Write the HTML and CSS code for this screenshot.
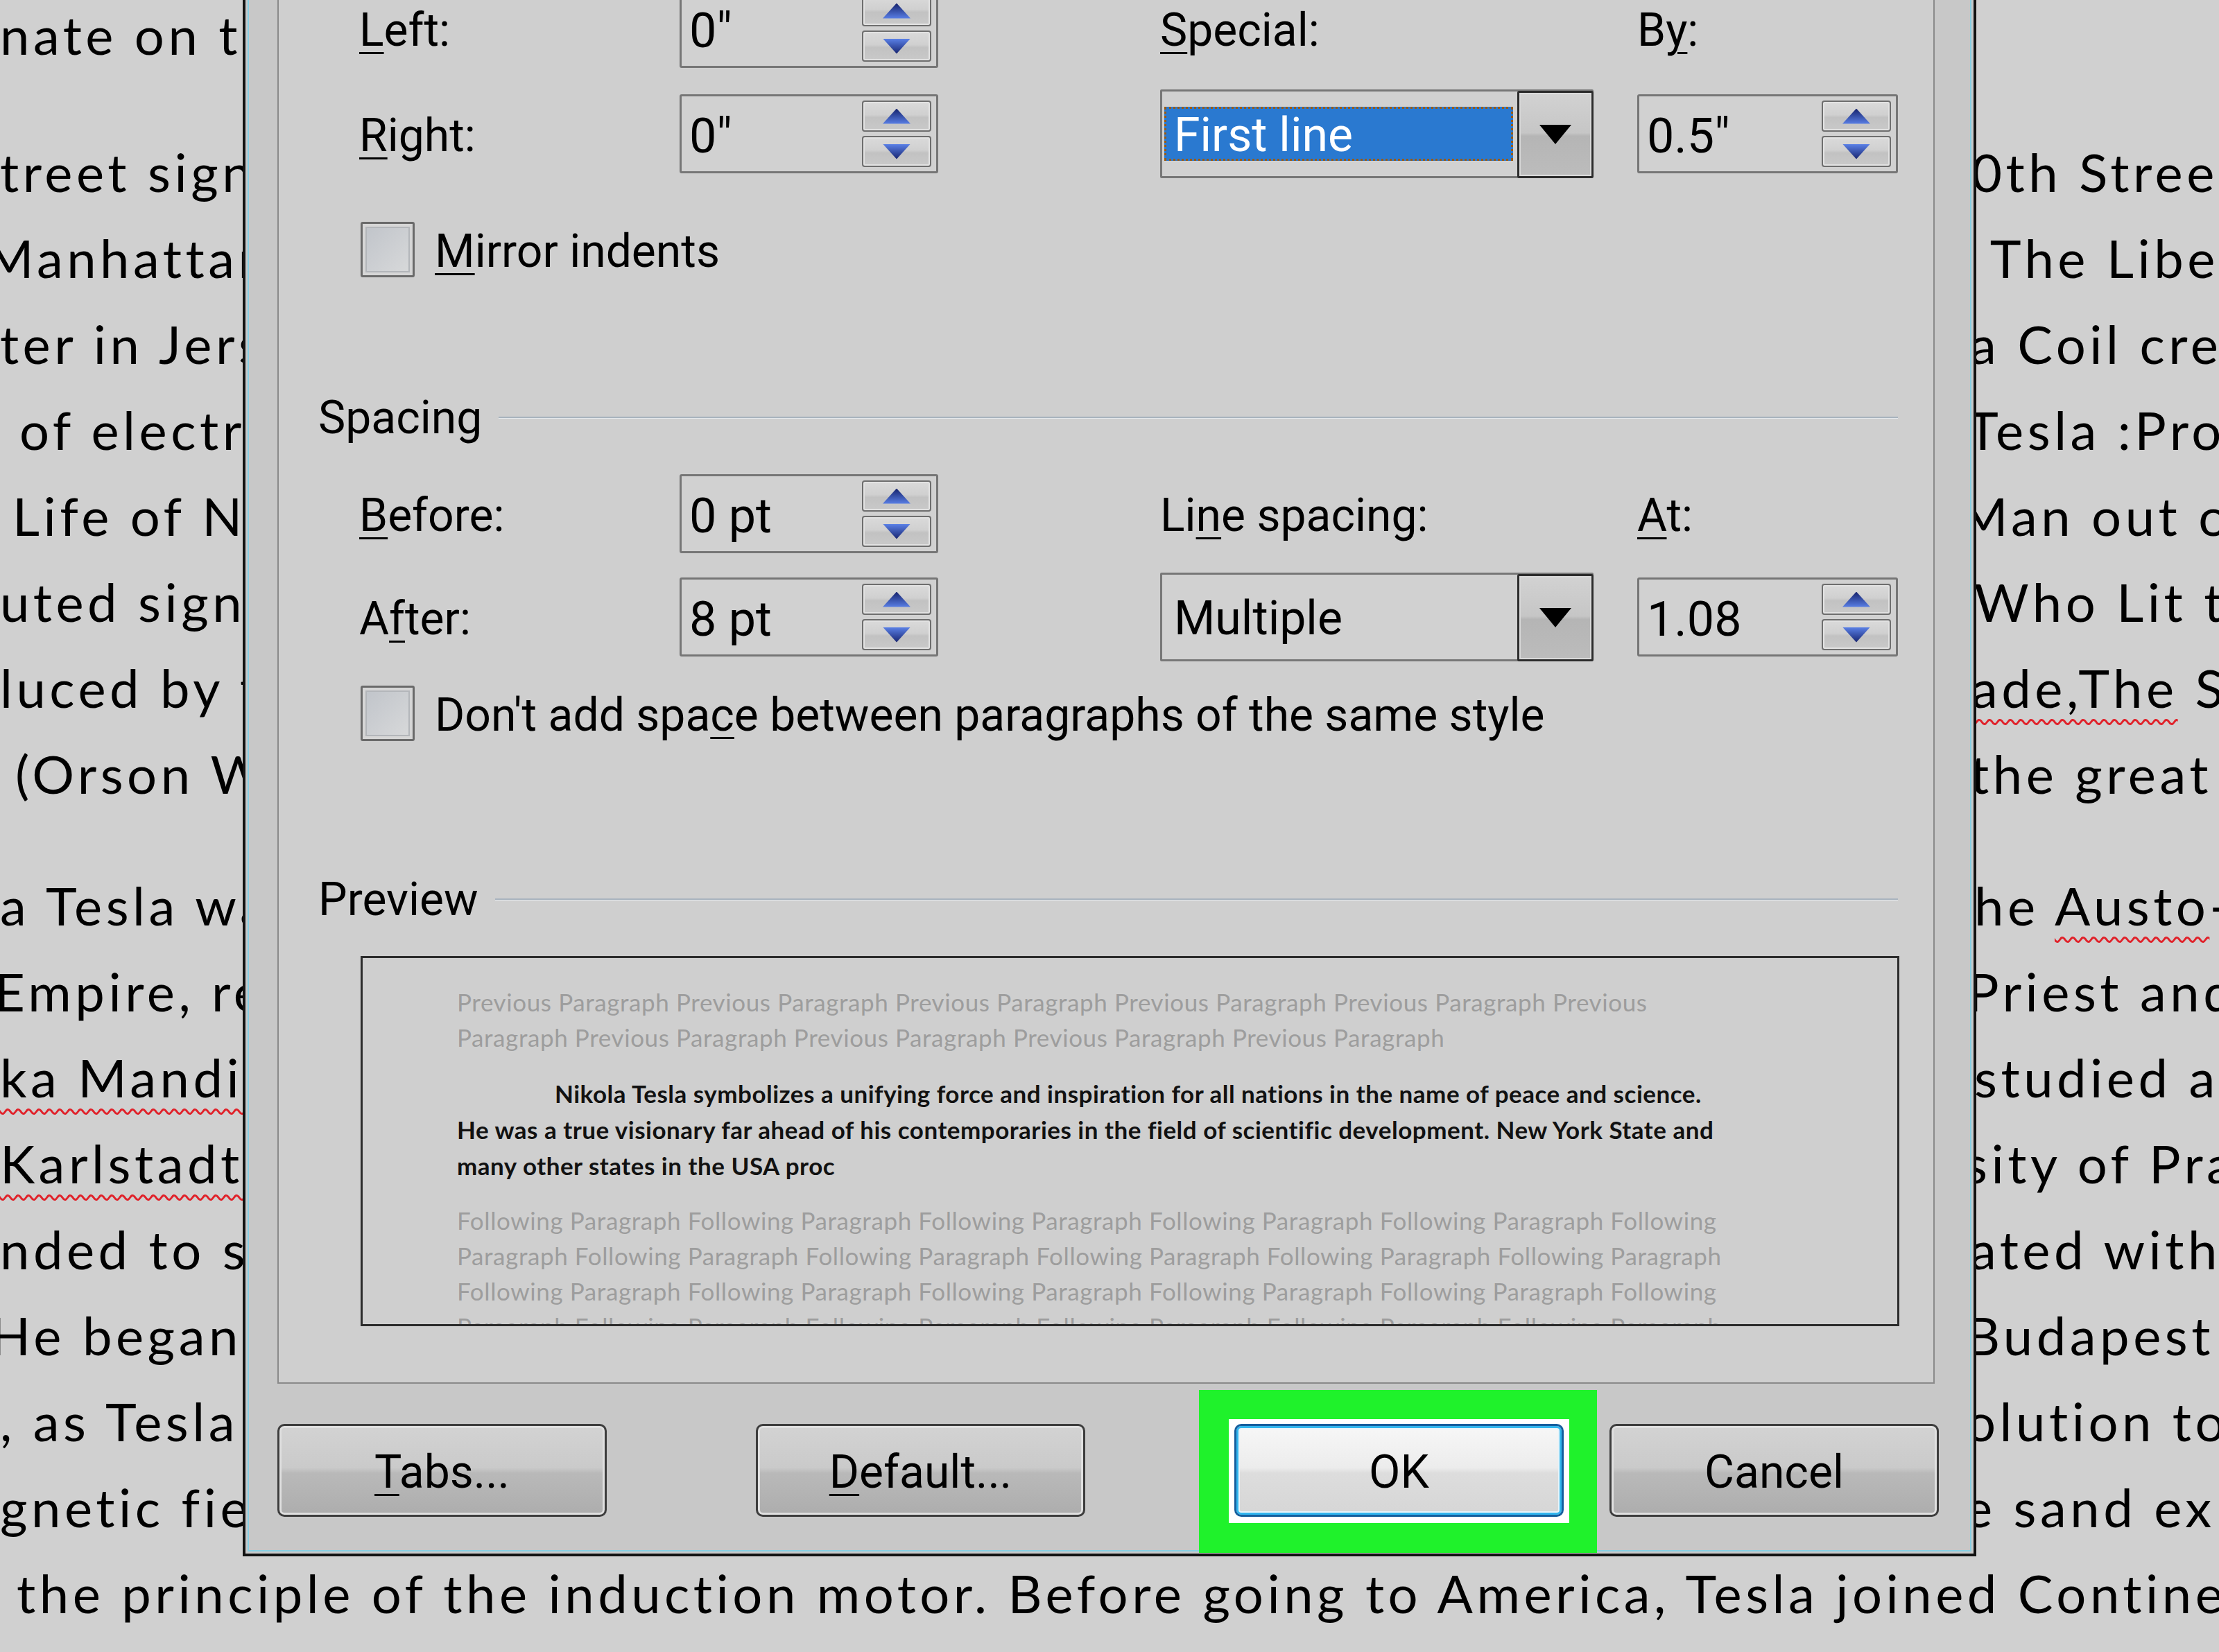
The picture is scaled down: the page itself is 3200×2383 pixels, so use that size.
FILE: index.html
```html
<!DOCTYPE html>
<html>
<head>
<meta charset="utf-8">
<link rel="stylesheet" href="styles.css">
</head>
<body>
<div class="doc">
  <div class="para p1">
    <div class="ln"><span class="l"><span>nate on the</span></span><span class="r"></span></div>
  </div>
  <div class="para p2">
    <div class="ln"><span class="l"><span>treet signs</span></span><span class="r"><span class="n4">0th Street</span></span></div>
    <div class="ln"><span class="l"><span class="n22">Manhattan</span></span><span class="r"><span>&nbsp;The Liberty</span></span></div>
    <div class="ln"><span class="l"><span>ter in Jersey</span></span><span class="r"><span class="n6">a Coil create</span></span></div>
    <div class="ln"><span class="l"><span class="p28">of electricity</span></span><span class="r"><span class="n10">Tesla :Pro</span></span></div>
    <div class="ln"><span class="l"><span class="p18">Life of Nikola</span></span><span class="r"><span class="n22">Man out of</span></span></div>
    <div class="ln"><span class="l"><span>uted significantly</span></span><span class="r"><span>Who Lit the</span></span></div>
    <div class="ln"><span class="l"><span>luced by the</span></span><span class="r"><span class="n4"><span class="sq">ade,The</span> Sky</span></span></div>
    <div class="ln"><span class="l"><span class="p22">(Orson Welles</span></span><span class="r"><span class="n6">the great</span></span></div>
  </div>
  <div class="para p3">
    <div class="ln"><span class="l"><span>a Tesla was</span></span><span class="r"><span>he <span class="sq">Austo</span>-Hungarian</span></span></div>
    <div class="ln"><span class="l"><span class="n8">Empire, re</span></span><span class="r"><span class="n10">Priest and</span></span></div>
    <div class="ln"><span class="l"><span><span class="sq">ka Mandi</span>c</span></span><span class="r"><span>studied at</span></span></div>
    <div class="ln"><span class="l"><span class="sq">Karlstadt</span></span><span class="r"><span class="n14">sity of Prague</span></span></div>
    <div class="ln"><span class="l"><span>nded to s</span></span><span class="r"><span class="n6">ated with</span></span></div>
    <div class="ln"><span class="l"><span class="n14">He began</span></span><span class="r"><span class="n12">Budapest</span></span></div>
    <div class="ln"><span class="l"><span>, as Tesla</span></span><span class="r"><span class="n12">olution to</span></span></div>
    <div class="ln"><span class="l"><span>gnetic field</span></span><span class="r"><span class="n14">e sand ex</span></span></div>
    <div class="ln full">the principle of the induction motor. Before going to America, Tesla joined Continental</div>
  </div>
</div>

<div class="dialog">
  <div class="panel">
    <div class="grid">
      <div class="c1 lbl"><u>L</u>eft:</div>
      <div class="c2 spin"><span class="sv">0"</span><span class="sb"><span class="sbt"><i class="up"></i></span><span class="sbt"><i class="dn"></i></span></span></div>
      <div class="c4 lbl"><u>S</u>pecial:</div>
      <div class="c6 lbl">B<u>y</u>:</div>

      <div class="c1 lbl"><u>R</u>ight:</div>
      <div class="c2 spin"><span class="sv">0"</span><span class="sb"><span class="sbt"><i class="up"></i></span><span class="sbt"><i class="dn"></i></span></span></div>
      <div class="c4 dd"><span class="dv sel">First line</span><span class="db"><i class="tri"></i></span></div>
      <div class="c6 spin"><span class="sv">0.5"</span><span class="sb"><span class="sbt"><i class="up"></i></span><span class="sbt"><i class="dn"></i></span></span></div>
    </div>

    <div class="check mirror"><span class="box"></span><span class="ct"><u>M</u>irror indents</span></div>

    <div class="ghead g-spacing">Spacing</div>

    <div class="grid grid2">
      <div class="c1 lbl"><u>B</u>efore:</div>
      <div class="c2 spin"><span class="sv">0 pt</span><span class="sb"><span class="sbt"><i class="up"></i></span><span class="sbt"><i class="dn"></i></span></span></div>
      <div class="c4 lbl">Li<u>n</u>e spacing:</div>
      <div class="c6 lbl"><u>A</u>t:</div>

      <div class="c1 lbl">A<u>f</u>ter:</div>
      <div class="c2 spin"><span class="sv">8 pt</span><span class="sb"><span class="sbt"><i class="up"></i></span><span class="sbt"><i class="dn"></i></span></span></div>
      <div class="c4 dd"><span class="dv">Multiple</span><span class="db"><i class="tri"></i></span></div>
      <div class="c6 spin"><span class="sv">1.08</span><span class="sb"><span class="sbt"><i class="up"></i></span><span class="sbt"><i class="dn"></i></span></span></div>
    </div>

    <div class="check dontadd"><span class="box"></span><span class="ct">Don't add spa<u>c</u>e between paragraphs of the same style</span></div>

    <div class="ghead g-preview">Preview</div>

    <div class="preview">
      <div class="pv-prev">
        <div>Previous Paragraph Previous Paragraph Previous Paragraph Previous Paragraph Previous Paragraph Previous</div>
        <div>Paragraph Previous Paragraph Previous Paragraph Previous Paragraph Previous Paragraph</div>
      </div>
      <div class="pv-main">
        <div class="first">Nikola Tesla symbolizes a unifying force and inspiration for all nations in the name of peace and science.</div>
        <div>He was a true visionary far ahead of his contemporaries in the field of scientific development. New York State and</div>
        <div>many other states in the USA proc</div>
      </div>
      <div class="pv-prev">
        <div>Following Paragraph Following Paragraph Following Paragraph Following Paragraph Following Paragraph Following</div>
        <div>Paragraph Following Paragraph Following Paragraph Following Paragraph Following Paragraph Following Paragraph</div>
        <div>Following Paragraph Following Paragraph Following Paragraph Following Paragraph Following Paragraph Following</div>
        <div>Paragraph Following Paragraph Following Paragraph Following Paragraph Following Paragraph Following Paragraph</div>
      </div>
    </div>
  </div>

  <div class="btns">
    <div class="btn"><span><u>T</u>abs...</span></div>
    <div class="btn"><span><u>D</u>efault...</span></div>
    <div class="hl"><div class="hl-in"><div class="btn ok"><span>OK</span></div></div></div>
    <div class="btn cancel"><span>Cancel</span></div>
  </div>
</div>
</body>
</html>
```

FILE: styles.css
```css
html, body {
  margin: 0;
  padding: 0;
}
body {
  width: 3200px;
  height: 2383px;
  overflow: hidden;
  position: relative;
  background: #d0d0d0;
  color: #000;
}

/* ---------- document behind ---------- */
.doc {
  margin-top: -12px;
  font-family: Lato, "Open Sans", sans-serif;
  font-size: 76px;
  letter-spacing: 5.5px;
  line-height: 124px;
}
.para.p1 { margin-bottom: 74px; }
.para.p2 { margin-bottom: 66px; }
.ln {
  display: flex;
  justify-content: space-between;
  height: 124px;
  white-space: nowrap;
}
.ln .l {
  width: 400px;
  overflow: hidden;
}
.ln .r {
  width: 353px;
}
.ln .l > span,
.ln .r > span {
  display: inline-block;
}
.ln.full {
  display: block;
  padding-left: 24px;
}
.n4 { margin-left: -4px; }
.n6 { margin-left: -6px; }
.n8 { margin-left: -8px; }
.n10 { margin-left: -10px; }
.n12 { margin-left: -12px; }
.n14 { margin-left: -14px; }
.n22 { margin-left: -22px; }
.p18 { margin-left: 18px; }
.p22 { margin-left: 22px; }
.p28 { margin-left: 28px; }
.sq {
  text-decoration: underline wavy #e0222a;
  text-decoration-thickness: 3px;
  text-underline-offset: 16px;
  text-decoration-skip-ink: none;
}

/* ---------- dialog ---------- */
.dialog {
  position: absolute;
  left: 350px;
  top: -100px;
  width: 2500px;
  box-sizing: border-box;
  border: 4px solid #121212;
  border-top: none;
  background: #c8c8c8;
  padding: 20px 56px 0 46px;
  box-shadow: inset 0 0 0 3px #c8c8c8, inset 0 0 0 5px #86cfe3;
  font-family: Roboto, "Noto Sans", sans-serif;
  font-size: 66px;
  color: #000;
}
.dialog u {
  text-decoration-thickness: 3px;
  text-underline-offset: 9px;
}
.panel {
  border: 2px solid #8a8a8a;
  background: #cfcfcf;
  padding: 62px 51px 81px 116px;
}
.grid {
  display: grid;
  grid-template-columns: 462px 373px 320px 625px 63px 376px;
  row-gap: 31px;
  align-items: center;
}
.grid2 {
  margin-top: 42px;
  row-gap: 28px;
}
.c1 { grid-column: 1; }
.c2 { grid-column: 2; }
.c4 { grid-column: 4; }
.c6 { grid-column: 6; }
.lbl {
  line-height: 74px;
  padding-top: 6px;
  white-space: nowrap;
}

/* spin box */
.spin {
  display: flex;
  height: 114px;
  box-sizing: border-box;
  border: 3px solid #767676;
  border-radius: 3px;
  background: #d1d1d1;
}
.sv {
  flex: 1;
  align-self: center;
  padding: 5px 0 0 11px;
  font-size: 70px;
  line-height: 80px;
}
.sb {
  width: 100px;
  display: flex;
  flex-direction: column;
  gap: 6px;
  padding: 6px 7px 6px 0;
}
.sbt {
  flex: 1;
  box-sizing: border-box;
  border: 2px solid #6e6e6e;
  border-radius: 4px;
  background: linear-gradient(#dadada 0%, #d0d0d0 45%, #c2c2c2 55%, #c9c9c9 100%);
  box-shadow: inset 0 0 0 2px #e2e2e2;
  display: flex;
  align-items: center;
  justify-content: center;
}
.up, .dn {
  display: block;
  width: 40px;
  height: 22px;
}
.up {
  background: linear-gradient(#16236e, #5a80e6);
  clip-path: polygon(50% 0, 100% 100%, 0 100%);
}
.dn {
  background: linear-gradient(#5a80e6, #16236e);
  clip-path: polygon(0 0, 100% 0, 50% 100%);
}

/* dropdown */
.dd {
  display: flex;
  height: 128px;
  box-sizing: border-box;
  border: 3px solid #777;
  border-radius: 2px;
  background: #d1d1d1;
}
.dv {
  flex: 1;
  margin: 22px 6px 22px 3px;
  padding: 4px 0 0 14px;
  display: flex;
  align-items: center;
  font-size: 68px;
  white-space: nowrap;
}
.dv.sel {
  background: #2a79d0;
  color: #fff;
  outline: 3px dotted #9a5a12;
  outline-offset: -3px;
}
.db {
  width: 110px;
  margin: -1px -3px -3px 0;
  box-sizing: border-box;
  border: 3px solid #2c2c2c;
  border-radius: 3px;
  background: linear-gradient(#d2d2d2 0%, #c6c6c6 48%, #b5b5b5 52%, #bcbcbc 100%);
  box-shadow: inset 0 0 0 2px #d9d9d9;
  display: flex;
  align-items: center;
  justify-content: center;
}
.tri {
  display: block;
  width: 46px;
  height: 28px;
  background: #000;
  clip-path: polygon(0 0, 100% 0, 50% 100%);
}

/* checkbox */
.check {
  display: flex;
  align-items: center;
  gap: 29px;
  height: 80px;
  margin-left: 2px;
  white-space: nowrap;
}
.check .ct {
  line-height: 74px;
  padding-top: 6px;
}
.mirror { margin-top: 63px; }
.dontadd { margin-top: 35px; }
.box {
  width: 78px;
  height: 80px;
  box-sizing: border-box;
  border: 3px solid #6a6a6a;
  border-radius: 3px;
  background: linear-gradient(135deg, #bfc3c9, #d9dadb);
  box-shadow: inset 0 0 0 4px #d6d6d6, inset 0 0 0 6px #b3b6ba;
}

/* group headings */
.ghead {
  display: flex;
  align-items: center;
  height: 80px;
  margin-left: -59px;
}
.ghead::after {
  content: "";
  flex: 1;
  margin-left: 24px;
  border-top: 2px solid #a8b3be;
  border-bottom: 1px solid #e4e8ec;
}
.g-spacing { margin-top: 162px; }
.g-preview { margin-top: 188px; }

/* preview */
.preview {
  margin: 42px 0 0 2px;
  width: 2219px;
  height: 534px;
  box-sizing: border-box;
  border: 3px solid #2c2c2c;
  padding: 38px 0 0 136px;
  overflow: hidden;
  font-family: Lato, "Open Sans", sans-serif;
  font-size: 35px;
  line-height: 51px;
  white-space: nowrap;
}
.pv-prev {
  color: #9d9d9d;
  letter-spacing: 0.6px;
}
.pv-main {
  color: #111;
  font-weight: 700;
  letter-spacing: 0.5px;
  line-height: 52px;
  margin: 29px 0 28px;
}
.pv-main .first {
  padding-left: 141px;
}

/* buttons */
.btns {
  display: flex;
  gap: 215px;
  margin-top: 58px;
  padding-bottom: 53px;
}
.btn {
  flex: none;
  width: 475px;
  height: 134px;
  box-sizing: border-box;
  border: 3px solid #3d3d3d;
  border-radius: 10px;
  background: linear-gradient(#d3d3d3 0%, #cacaca 47%, #b9b9b9 53%, #adadad 100%);
  box-shadow: inset 0 0 0 3px #e0e0e0;
  display: flex;
  align-items: center;
  justify-content: center;
}
.btn > span {
  padding-top: 4px;
}
.btn.cancel {
  margin-left: -149px;
}
.hl {
  flex: none;
  background: #1ff22b;
  padding: 42px 40px 43px 43px;
  margin: -49px -48px -52px -51px;
}
.hl-in {
  background: #fff;
  padding: 7px 8px 9px 8px;
}
.btn.ok {
  border-color: #155f9e;
  background: linear-gradient(#f7f7f7 0%, #ececec 47%, #dddddd 53%, #d6d6d6 100%);
  box-shadow: inset 0 0 0 3px #32b6ee, inset 0 0 0 5px #e8f4fa;
}
```
